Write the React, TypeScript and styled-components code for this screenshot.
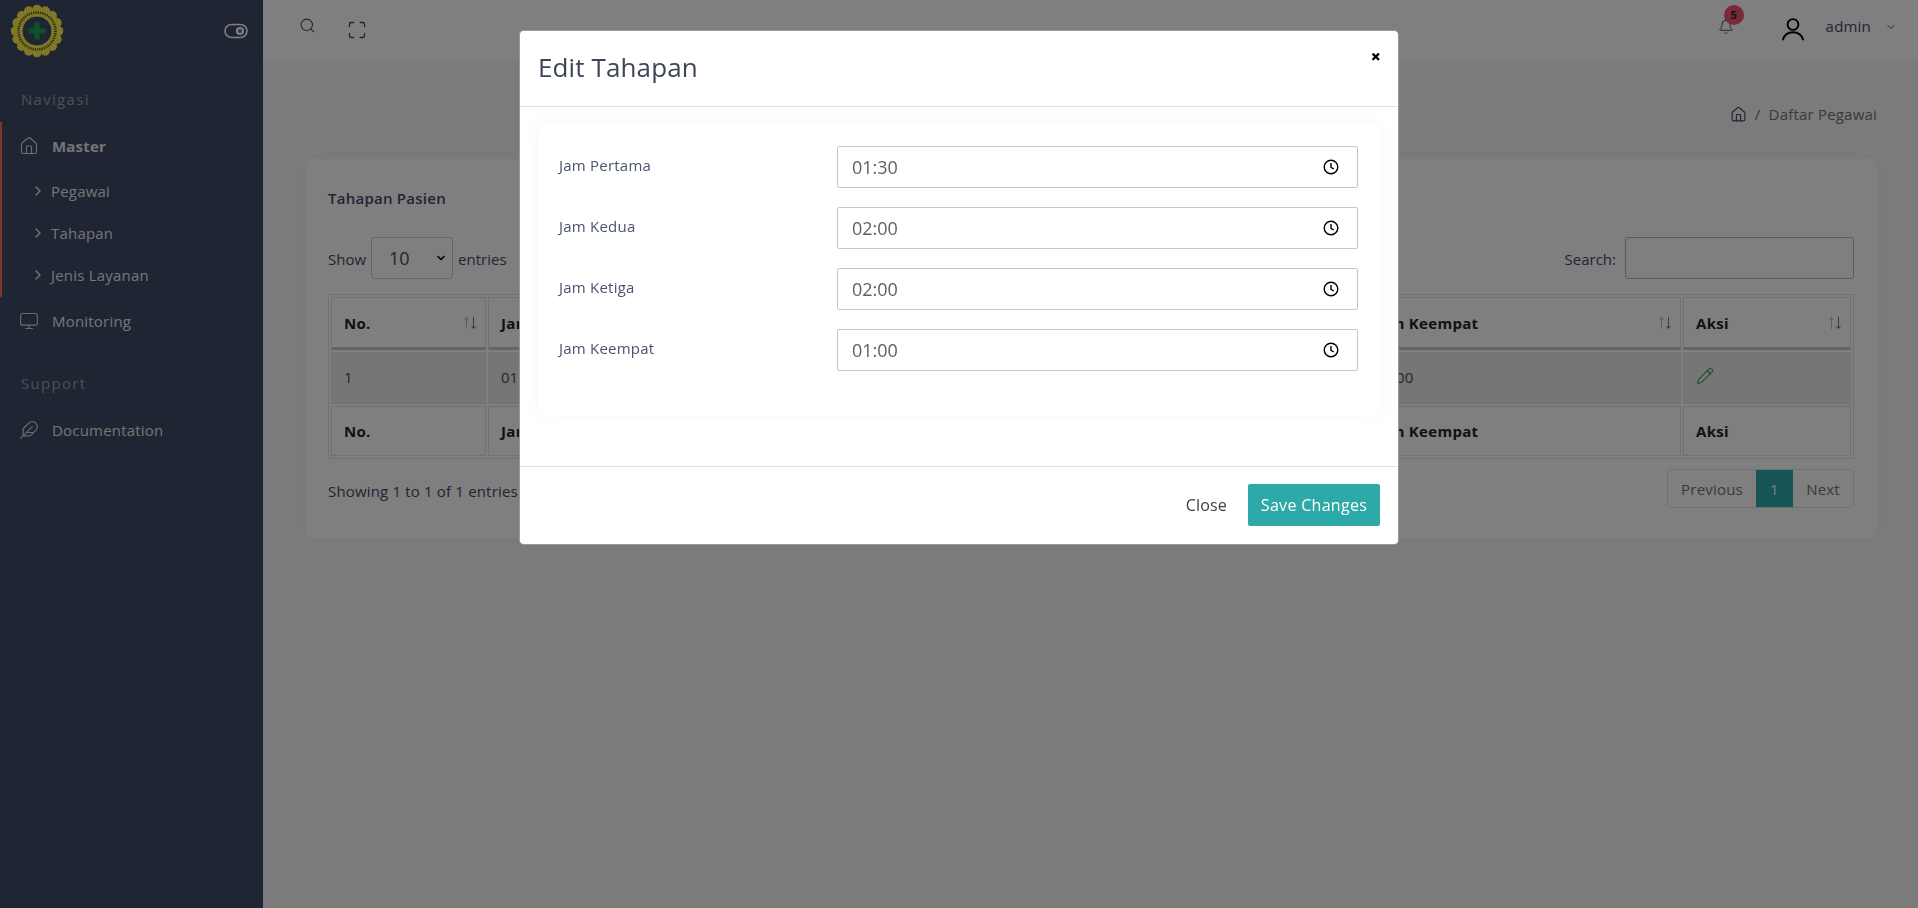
import React from "react";
import styled, { createGlobalStyle } from "styled-components";
import { Bell, ChevronDown, ChevronRight, Feather, House, Maximize, Monitor, Pencil, Search } from "lucide-react";

const Global = createGlobalStyle`
  html, body { margin: 0; height: 100%; overflow: hidden; }
  body { font-family: "Open Sans", "Liberation Sans", sans-serif; background: #f7f7f9; color: #3e4a66; }
  * { box-sizing: border-box; }
`;

const Page = styled.div`
  display: grid;
  grid-template-columns: 263px 1fr;
  height: 908px;
  width: 1918px;
`;
const Sidebar = styled.aside`
  background: #3e4a66;
  display: flex;
  flex-direction: column;
  color: #fff;
`;
const Brand = styled.div`
  height: 61px;
  display: flex;
  align-items: center;
  justify-content: space-between;
  padding: 0 15px 0 10px;
  color: #fff;
`;
const SectionLabel = styled.div<{ $top: number }>`
  margin-top: ${(p) => p.$top}px;
  padding-left: 21px;
  height: 22px;
  line-height: 22px;
  font-size: 15px;
  letter-spacing: 1.3px;
  color: #9aa0ad;
`;
const MenuGroup = styled.div`
  margin-top: 12px;
  border-left: 2px solid #ff6b5f;
  height: 175px;
  display: flex;
  flex-direction: column;
`;
const MenuRow = styled.div<{ $bold?: boolean; $top?: number }>`
  height: 48px;
  margin-top: ${(p) => p.$top ?? 0}px;
  display: flex;
  align-items: center;
  gap: 13px;
  padding-left: 19px;
  font-size: 15px;
  letter-spacing: 0.2px;
  font-weight: ${(p) => (p.$bold ? 700 : 400)};
  color: #e8eaee;
  svg { flex: none; width: 20px; height: 20px; stroke-width: 1.4; color: #d8d8d8; }
`;
const GroupHead = styled(MenuRow)`
  margin-left: -2px;
`;
const SubRow = styled.div`
  height: 42px;
  display: flex;
  align-items: center;
  gap: 5px;
  padding-left: 28px;
  font-size: 15px;
  letter-spacing: 0.2px;
  color: #e8eaee;
  svg { width: 16px; height: 16px; stroke-width: 2; }
`;
const Main = styled.main`
  display: flex;
  flex-direction: column;
  min-width: 0;
`;
const Topbar = styled.header`
  height: 61px;
  background: #fff;
  display: flex;
  align-items: center;
  padding: 0 21px 0 36px;
  box-shadow: 0 1px 10px rgba(0, 0, 0, 0.03);
`;
const TopIcon = styled.span<{ $left?: number; $raise?: number }>`
  display: inline-flex;
  margin-left: ${(p) => p.$left ?? 0}px;
  margin-top: ${(p) => -(p.$raise ?? 0)}px;
  color: #3e4a66;
`;
const Spacer = styled.div`
  flex: 1;
`;
const BellWrap = styled.span`
  position: relative;
  display: inline-flex;
  margin-right: 47px;
  margin-top: -8px;
  color: #3e4a66;
`;
const Badge = styled.span`
  position: absolute;
  top: -14px;
  left: 6px;
  width: 20px;
  height: 20px;
  border-radius: 50%;
  background: #f1556c;
  color: #1b2436;
  font-size: 11px;
  font-weight: 700;
  display: flex;
  align-items: center;
  justify-content: center;
`;
const UserName = styled.span`
  margin-left: 21px;
  margin-top: -10px;
  font-size: 15px;
  letter-spacing: 0.2px;
  color: #3e4a66;
`;
const Crumbs = styled.nav`
  height: 98px;
  padding: 8px 41px 0 0;
  display: flex;
  align-items: center;
  justify-content: flex-end;
  gap: 8px;
  font-size: 15px;
  letter-spacing: 0.2px;
  color: #6c757d;
  svg { color: #3e4a66; }
`;
const Card = styled.section`
  margin: 0 41px 0 43px;
  height: 379px;
  background: #fff;
  border-radius: 8px;
  padding: 28px 23px 0 22px;
  box-shadow: 0 0 20px rgba(0, 0, 0, 0.03);
  font-size: 15px;
  color: #3e4a66;
`;
const CardTitle = styled.h2`
  margin: 0;
  font-size: 15px;
  line-height: 22px;
  font-weight: 600;
  letter-spacing: 0.25px;
`;
const TableTools = styled.div`
  margin-top: 28px;
  height: 42px;
  display: flex;
  align-items: center;
  justify-content: space-between;
`;
const ToolGroup = styled.label`
  display: flex;
  align-items: center;
  gap: 5px;
  padding-top: 1px;
`;
const FakeSelect = styled.div`
  width: 82px;
  height: 42px;
  border: 1px solid #cfcfcf;
  border-radius: 3px;
  display: flex;
  align-items: center;
  justify-content: space-between;
  padding: 0 5px 0 17px;
  font-size: 18px;
  margin-top: -1px;
  svg { stroke-width: 3.4; color: #111; }
`;
const SearchInput = styled.div`
  width: 229px;
  height: 42px;
  margin-left: 4px;
  margin-top: -1px;
  border: 1px solid #b5b5b5;
  border-radius: 3px;
`;
const Table = styled.table`
  margin-top: 15px;
  width: 1526px;
  height: 164px;
  table-layout: fixed;
  border: 1px solid #dee2e6;
  border-collapse: separate;
  border-spacing: 2px;
`;
const Th = styled.th<{ $footer?: boolean }>`
  position: relative;
  height: ${(p) => (p.$footer ? 50 : 53)}px;
  padding: 0 12px;
  text-align: left;
  font-size: 15px;
  font-weight: 700;
  letter-spacing: 0.3px;
  color: #212529;
  border: 1px solid #dee2e6;
  border-bottom-width: ${(p) => (p.$footer ? 1 : 3)}px;
  border-bottom-color: ${(p) => (p.$footer ? "#dee2e6" : "#c9c9c9")};
`;
const Td = styled.td`
  height: 52px;
  padding: 0 12px 2px;
  font-size: 15px;
  color: #3e4a66;
  background: #ededed;
  border: 1px solid #e8e8e8;
  svg { display: block; color: #2fa866; margin: -3px 0 0 0; }
`;
const SortMark = styled.svg`
  position: absolute;
  right: 8px;
  top: 50%;
  margin-top: -7px;
  width: 14px;
  height: 14px;
`;
const TableFoot = styled.div`
  display: flex;
  justify-content: space-between;
  align-items: flex-start;
  margin-top: 10px;
`;
const ShowingText = styled.div`
  margin-top: 12px;
  line-height: 20px;
  letter-spacing: 0.17px;
`;
const Pager = styled.div`
  width: 187px;
  height: 39px;
  display: flex;
  border: 1px solid #dee2e6;
  border-radius: 4px;
  overflow: hidden;
  font-size: 15px;
  letter-spacing: 0.2px;
`;
const PageLink = styled.div<{ $active?: boolean; $w: number }>`
  width: ${(p) => p.$w}px;
  display: flex;
  align-items: center;
  justify-content: center;
  background: ${(p) => (p.$active ? "#2ea9aa" : "transparent")};
  color: ${(p) => (p.$active ? "#fff" : "#6c757d")};
`;
const Overlay = styled.div`
  position: fixed;
  inset: 0;
  background: rgba(0, 0, 0, 0.5);
  display: flex;
  justify-content: center;
  align-items: flex-start;
  padding-top: 30px;
`;
const Modal = styled.div`
  position: relative;
  width: 880px;
  height: 515px;
  background: #fff;
  border: 1px solid rgba(0, 0, 0, 0.4);
  border-radius: 5px;
  display: flex;
  flex-direction: column;
  color: #3e4556;
`;
const ModalHeader = styled.div`
  height: 76px;
  flex: none;
  display: flex;
  align-items: center;
  padding: 0 18px;
  border-bottom: 1px solid #dee2e6;
`;
const ModalTitle = styled.h3`
  margin: 0;
  font-size: 26px;
  font-weight: 400;
  line-height: 34px;
  letter-spacing: 0.12px;
  margin-top: -3px;
`;
const CloseX = styled.button`
  position: absolute;
  top: 13px;
  right: 17px;
  padding: 0;
  border: 0;
  background: none;
  font-family: "Open Sans", sans-serif;
  font-weight: 800;
  font-size: 18px;
  line-height: 24px;
  color: #000;
`;
const ModalBody = styled.div`
  flex: 1;
  padding: 17px 18px 0;
`;
const FormCard = styled.div`
  height: 291px;
  background: #fff;
  border-radius: 8px;
  padding: 22px 22px 0 21px;
  box-shadow: 0 0 20px rgba(0, 0, 0, 0.04);
  display: flex;
  flex-direction: column;
  gap: 19px;
`;
const FormRow = styled.div`
  display: grid;
  grid-template-columns: 278px 1fr;
  align-items: center;
`;
const FieldLabel = styled.label`
  font-size: 15px;
  letter-spacing: 0.22px;
  margin-top: -5px;
  color: #4a5470;
`;
const TimeField = styled.div`
  height: 42px;
  border: 1px solid #c7c7c7;
  border-radius: 2px;
  display: flex;
  align-items: center;
  padding: 0 18px 0 14px;
`;
const TimeInput = styled.input`
  flex: 1;
  min-width: 0;
  border: 0;
  outline: 0;
  padding: 0;
  background: none;
  font-family: "Open Sans", sans-serif;
  font-size: 18px;
  color: #5c5f66;
`;
const ModalFooter = styled.div`
  height: 78px;
  flex: none;
  border-top: 1px solid #dee2e6;
  padding: 0 18px 2px;
  display: flex;
  align-items: center;
  justify-content: flex-end;
`;
const CloseButton = styled.button`
  border: 0;
  background: none;
  padding: 0;
  margin-right: 21px;
  font-family: "Open Sans", sans-serif;
  font-size: 16px;
  letter-spacing: 0.2px;
  color: #3b3f47;
`;
const SaveButton = styled.button`
  width: 132px;
  height: 42px;
  border: 0;
  border-radius: 2px;
  background: #2ea9aa;
  color: #fff;
  padding: 0;
  font-family: "Open Sans", sans-serif;
  font-size: 16px;
  letter-spacing: 0.3px;
`;

const Logo = () => {
  const bumps = Array.from({ length: 16 }, (_, i) => {
    const a = (i / 16) * Math.PI * 2;
    return { x: 27 + Math.cos(a) * 21.5, y: 27 + Math.sin(a) * 21.5, key: i };
  });
  return (
    <svg width="54" height="54" viewBox="0 0 54 54" aria-label="logo">
      {bumps.map((b) => (
        <circle key={b.key} cx={b.x} cy={b.y} r="4.8" fill="#fff04a" />
      ))}
      <circle cx="27" cy="27" r="22.500" fill="#fff04a" />
      <circle cx="27" cy="27" r="18.500" fill="none" stroke="#54541e" strokeWidth="2.6" strokeDasharray="1.2 1.1" />
      <circle cx="27" cy="27" r="15" fill="#3e4a66" stroke="#fff04a" strokeWidth="1" />
      <path d="M24.500 18.500h5V24.500h6v5h-6v6h-5v-6h-6v-5h6z" fill="#14a84a" />
    </svg>
  );
};
const ToggleIcon = () => (
  <svg width="24" height="16" viewBox="0 0 24 16" fill="none" stroke="#fff" strokeWidth="1.6">
    <rect x="1" y="1.500" width="22" height="13" rx="6.500" />
    <circle cx="16" cy="8" r="3" fill="#fff" fillOpacity="0.15" strokeWidth="2.2" />
  </svg>
);
const UserIcon = () => (
  <svg width="24" height="24" viewBox="0 0 24 24" fill="none" stroke="#000" strokeWidth="1.9" strokeLinecap="round">
    <circle cx="12" cy="7.500" r="5.400" />
    <path d="M2 22.500c1.500-5 5.200-7.200 10-7.200s8.500 2.200 10 7.200" />
  </svg>
);
const ClockIcon = () => (
  <svg width="16" height="16" viewBox="0 0 16 16" fill="none" stroke="#000" strokeWidth="1.4">
    <circle cx="8" cy="8" r="6.800" />
    <path d="M8 4v4.300l2.800 1.700" />
  </svg>
);
const Sort = () => (
  <SortMark viewBox="0 0 14 14" fill="none" strokeWidth="1">
    <path d="M3.500 13V1.500M1.500 4l2-2.500 2 2.500" stroke="#bbb" />
    <path d="M10.500 1v11.500M8.500 10l2 2.500 2-2.500" stroke="#777" />
  </SortMark>
);

const columns = ["No.", "Jam Pertama", "Jam Kedua", "Jam Ketiga", "Jam Keempat", "Aksi"];
const widths = [155, 289, 289, 290, 319, 168];
const values = ["1", "01:30", "02:00", "02:00", "01:00"];
const fields = [
  ["Jam Pertama", "01:30"],
  ["Jam Kedua", "02:00"],
  ["Jam Ketiga", "02:00"],
  ["Jam Keempat", "01:00"],
];

export default function App() {
  return (
    <>
      <Global />
      <Page>
        <Sidebar>
          <Brand>
            <Logo />
            <ToggleIcon />
          </Brand>
          <SectionLabel $top={27}>Navigasi</SectionLabel>
          <MenuGroup>
            <GroupHead $bold>
              <House />
              Master
            </GroupHead>
            {["Pegawai", "Tahapan", "Jenis Layanan"].map((s) => (
              <SubRow key={s}>
                <ChevronRight />
                {s}
              </SubRow>
            ))}
          </MenuGroup>
          <MenuRow>
            <Monitor />
            Monitoring
          </MenuRow>
          <SectionLabel $top={27}>Support</SectionLabel>
          <MenuRow $top={12}>
            <Feather />
            Documentation
          </MenuRow>
        </Sidebar>
        <Main>
          <Topbar>
            <TopIcon $raise={10}>
              <Search size={17} strokeWidth={1.5} />
            </TopIcon>
            <TopIcon $left={31} $raise={2}>
              <Maximize size={20} strokeWidth={1.6} />
            </TopIcon>
            <Spacer />
            <BellWrap>
              <Bell size={16} strokeWidth={1.5} />
              <Badge>5</Badge>
            </BellWrap>
            <TopIcon $raise={4}>
              <UserIcon />
            </TopIcon>
            <UserName>admin</UserName>
            <TopIcon $left={14} $raise={8}>
              <ChevronDown size={12} />
            </TopIcon>
          </Topbar>
          <Crumbs>
            <House size={17} strokeWidth={1.6} />
            <span>/</span>
            <span>Daftar Pegawai</span>
          </Crumbs>
          <Card>
            <CardTitle>Tahapan Pasien</CardTitle>
            <TableTools>
              <ToolGroup>
                Show
                <FakeSelect>
                  10
                  <ChevronDown size={12} />
                </FakeSelect>
                entries
              </ToolGroup>
              <ToolGroup>
                Search:
                <SearchInput />
              </ToolGroup>
            </TableTools>
            <Table>
              <colgroup>
                {widths.map((w, i) => (
                  <col key={i} style={{ width: w }} />
                ))}
              </colgroup>
              <thead>
                <tr>
                  {columns.map((c) => (
                    <Th key={c}>
                      {c}
                      <Sort />
                    </Th>
                  ))}
                </tr>
              </thead>
              <tbody>
                <tr>
                  {values.map((v, i) => (
                    <Td key={i}>{v}</Td>
                  ))}
                  <Td>
                    <Pencil size={18} strokeWidth={1.6} />
                  </Td>
                </tr>
              </tbody>
              <tfoot>
                <tr>
                  {columns.map((c) => (
                    <Th key={c} $footer>
                      {c}
                    </Th>
                  ))}
                </tr>
              </tfoot>
            </Table>
            <TableFoot>
              <ShowingText>Showing 1 to 1 of 1 entries</ShowingText>
              <Pager>
                <PageLink $w={88}>Previous</PageLink>
                <PageLink $w={37} $active>
                  1
                </PageLink>
                <PageLink $w={60}>Next</PageLink>
              </Pager>
            </TableFoot>
          </Card>
        </Main>
      </Page>
      <Overlay>
        <Modal>
          <ModalHeader>
            <ModalTitle>Edit Tahapan</ModalTitle>
            <CloseX>×</CloseX>
          </ModalHeader>
          <ModalBody>
            <FormCard>
              {fields.map(([label, value]) => (
                <FormRow key={label}>
                  <FieldLabel>{label}</FieldLabel>
                  <TimeField>
                    <TimeInput type="text" readOnly value={value} />
                    <ClockIcon />
                  </TimeField>
                </FormRow>
              ))}
            </FormCard>
          </ModalBody>
          <ModalFooter>
            <CloseButton>Close</CloseButton>
            <SaveButton>Save Changes</SaveButton>
          </ModalFooter>
        </Modal>
      </Overlay>
    </>
  );
}
